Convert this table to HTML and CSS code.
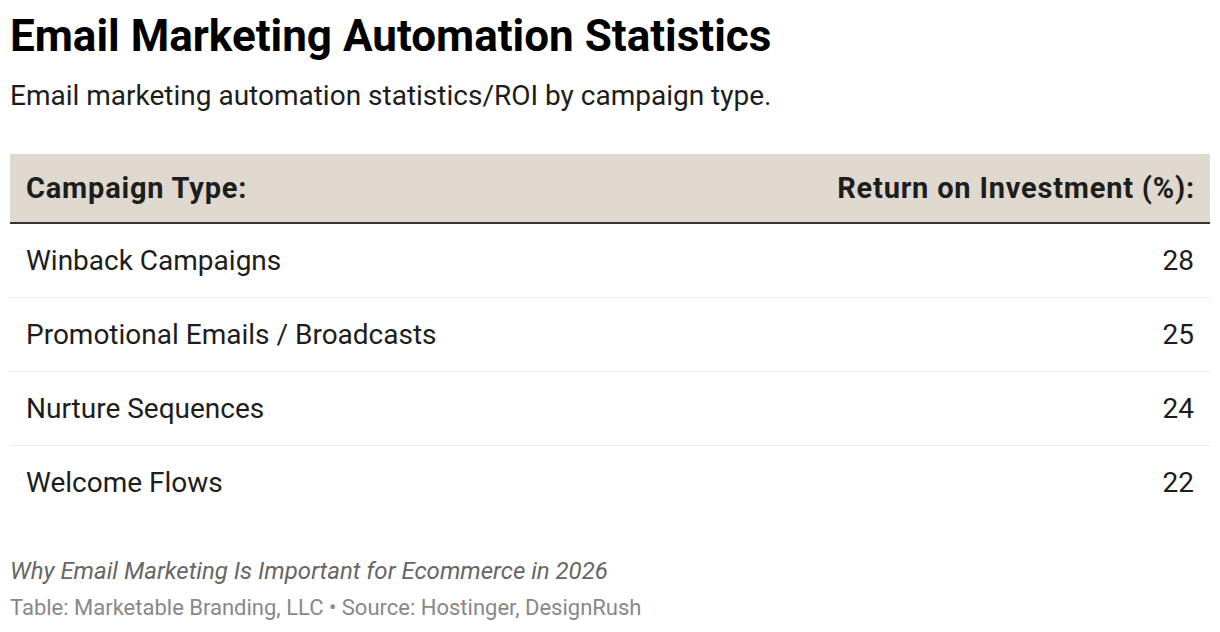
FILE: index.html
```html
<!DOCTYPE html>
<html>
<head>
<meta charset="utf-8">
<link rel="stylesheet" href="styles.css">
</head>
<body>
<div class="chart">
  <h1 class="title">Email Marketing Automation Statistics</h1>
  <p class="desc">Email marketing automation statistics/ROI by campaign type.</p>
  <table class="tbl">
    <thead>
      <tr><th class="c1">Campaign Type:</th><th class="c2">Return on Investment (%):</th></tr>
    </thead>
    <tbody>
      <tr><td class="c1">Winback Campaigns</td><td class="c2">28</td></tr>
      <tr><td class="c1">Promotional Emails / Broadcasts</td><td class="c2">25</td></tr>
      <tr><td class="c1">Nurture Sequences</td><td class="c2">24</td></tr>
      <tr class="last"><td class="c1">Welcome Flows</td><td class="c2">22</td></tr>
    </tbody>
  </table>
  <div class="notes">Why Email Marketing Is Important for Ecommerce in 2026</div>
  <div class="source">Table: Marketable Branding, LLC • Source: Hostinger, DesignRush</div>
</div>
</body>
</html>
```
FILE: styles.css
```css
* { box-sizing: border-box; }
html, body { margin: 0; padding: 0; background: #fff; }
body { font-family: Roboto, "Liberation Sans", sans-serif; color: #1d1d1d; }
.chart { padding: 10px 10px 0 10px; width: 1220px; }
.title { margin: 0; font-size: 44px; font-weight: 700; line-height: 52px; color: #000; }
.desc { margin: 17px 0 0 0; font-size: 28px; line-height: 34px; color: #1d1d1d; }
.tbl { margin-top: 41px; width: 1200px; border-collapse: collapse; }
.tbl th { background: #dfd8ce; font-size: 29px; letter-spacing: 0.8px; font-weight: 700; height: 69px; padding: 0 16px; border-bottom: 2px solid #333; color: #1d1d1d; }
.tbl th.c2 { padding-right: 15px; }
.tbl td { font-size: 28px; height: 74px; padding: 0 16px; border-bottom: 1px solid #ebebeb; color: #1d1d1d; }
.tbl tr.last td { border-bottom: none; }
.c1 { text-align: left; }
.c2 { text-align: right; }
.notes { margin-top: 38px; font-size: 24px; font-style: italic; color: #666; line-height: 28px; }
.source { margin-top: 9px; font-size: 22px; color: #888; line-height: 28px; }
```
